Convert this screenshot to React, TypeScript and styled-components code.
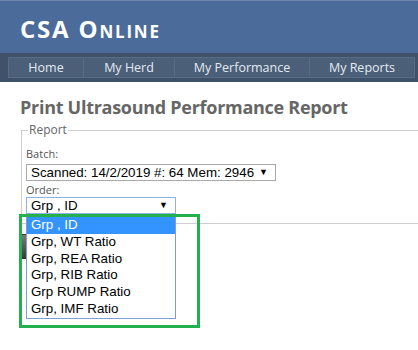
import React from "react";
import styled, { createGlobalStyle } from "styled-components";

const Global = createGlobalStyle`
  html, body { margin: 0; padding: 0; background: #fff; }
  body { font-family: "Open Sans", "Noto Sans", sans-serif; width: 418px; height: 350px; overflow: hidden; }
`;

const Header = styled.header`
  height: 53px;
  background: #4b6b9b;
  border-top: 1px solid #6f86a8;
  box-sizing: border-box;
  display: flex;
  align-items: center;
  padding-left: 20px;
`;

const Logo = styled.div`
  font-family: "Open Sans", sans-serif;
  font-weight: 700;
  font-size: 24px;
  font-variant: small-caps;
  color: #fff;
  letter-spacing: 1.8px;
  margin-top: 3px;
`;

const Nav = styled.nav`
  background: #3f5269;
  padding: 4px 0 4px 8px;
  display: flex;
`;

const NavItem = styled.a<{ $w: number }>`
  display: block;
  height: 21px;
  box-sizing: border-box;
  padding: 0 18px;
  background: #4b5f78;
  border: 1px solid #586c85;
  border-left-width: 0;
  &:first-child { border-left-width: 1px; }
  color: #e3e9f1;
  font-size: 12.5px;
  line-height: 19px;
  text-align: center;
  white-space: nowrap;
  min-width: ${(p) => p.$w}px;
`;

const Main = styled.main`
  padding: 14px 0 0 20px;
`;

const Title = styled.h1`
  margin: 0;
  font-size: 18px;
  line-height: 22px;
  font-weight: 700;
  color: #666;
  letter-spacing: -0.28px;
`;

const Fieldset = styled.fieldset`
  margin: 4px 0 0 1px;
  padding: 0 5px 9px 4px;
  border: 1px solid #cfcfcf;
  border-right: none;
  min-width: 0;
`;

const Legend = styled.legend`
  font-size: 12px;
  color: #666;
  padding: 0 1px;
  margin-left: 2px;
  line-height: 16px;
`;

const Label = styled.div<{ $mt: number }>`
  font-size: 11px;
  line-height: 14px;
  color: #555;
  margin-top: ${(p) => p.$mt}px;
`;

const SelectBox = styled.div<{ $w: number; $focus?: boolean; $mt: number }>`
  width: ${(p) => p.$w}px;
  height: 17px;
  box-sizing: border-box;
  border: 1px solid ${(p) => (p.$focus ? "#8fb0e2" : "#a9a9a9")};
  background: #fff;
  display: flex;
  align-items: center;
  padding: 0 7px 0 4px;
  margin-top: ${(p) => p.$mt}px;
  font-family: "Liberation Sans", Arial, sans-serif;
  font-size: 13.33px;
  color: #000;
`;

const SelectText = styled.span`
  flex: 1;
  overflow: hidden;
  white-space: nowrap;
  line-height: 15px;
`;

const Arrow = styled.span`
  font-size: 9px;
  line-height: 15px;
  margin-left: 4px;
  color: #000;
`;

const OrderField = styled.div`
  position: relative;
`;

const List = styled.ul`
  position: absolute;
  left: 0;
  top: 19px;
  width: 150px;
  box-sizing: border-box;
  margin: 0;
  padding: 0;
  list-style: none;
  border: 1px solid #7f9fd4;
  background: #fff;
  z-index: 2;
  font-family: "Liberation Sans", Arial, sans-serif;
  font-size: 13.33px;
`;

const Option = styled.li<{ $active?: boolean }>`
  height: 16.8px;
  line-height: 16.8px;
  padding-left: 4px;
  color: ${(p) => (p.$active ? "#fff" : "#000")};
  background: ${(p) => (p.$active ? "#3393ff" : "transparent")};
  white-space: nowrap;
`;

const Callout = styled.div`
  position: absolute;
  left: -7px;
  top: 17px;
  width: 181px;
  height: 114px;
  box-sizing: border-box;
  border: 3px solid #22b14c;
  z-index: 3;
  pointer-events: none;
`;

const PrintButton = styled.div`
  margin: 10px 0 0 1px;
  width: 70px;
  height: 25px;
  box-sizing: border-box;
  border: 1px solid #333;
  background: linear-gradient(#7a7a7a, #3a3a3a);
`;

const navItems = [
  { t: "Home", w: 76 },
  { t: "My Herd", w: 91 },
  { t: "My Performance", w: 135 },
  { t: "My Reports", w: 105 },
];

const options = [
  "Grp , ID",
  "Grp, WT Ratio",
  "Grp, REA Ratio",
  "Grp, RIB Ratio",
  "Grp RUMP Ratio",
  "Grp, IMF Ratio",
];

export default function App() {
  return (
    <>
      <Global />
      <Header>
        <Logo>CSA Online</Logo>
      </Header>
      <Nav>
        {navItems.map((n) => (
          <NavItem key={n.t} $w={n.w}>
            {n.t}
          </NavItem>
        ))}
      </Nav>
      <Main>
        <Title>Print Ultrasound Performance Report</Title>
        <Fieldset>
          <Legend>Report</Legend>
          <Label $mt={9}>Batch:</Label>
          <SelectBox $w={250} $mt={3}>
            <SelectText>Scanned: 14/2/2019 #: 64 Mem: 29461</SelectText>
            <Arrow>▼</Arrow>
          </SelectBox>
          <Label $mt={2}>Order:</Label>
          <OrderField>
            <SelectBox $w={150} $focus $mt={0}>
              <SelectText>Grp , ID</SelectText>
              <Arrow>▼</Arrow>
            </SelectBox>
            <List>
              {options.map((o, i) => (
                <Option key={o} $active={i === 0}>
                  {o}
                </Option>
              ))}
            </List>
            <Callout />
          </OrderField>
        </Fieldset>
        <PrintButton />
      </Main>
    </>
  );
}
